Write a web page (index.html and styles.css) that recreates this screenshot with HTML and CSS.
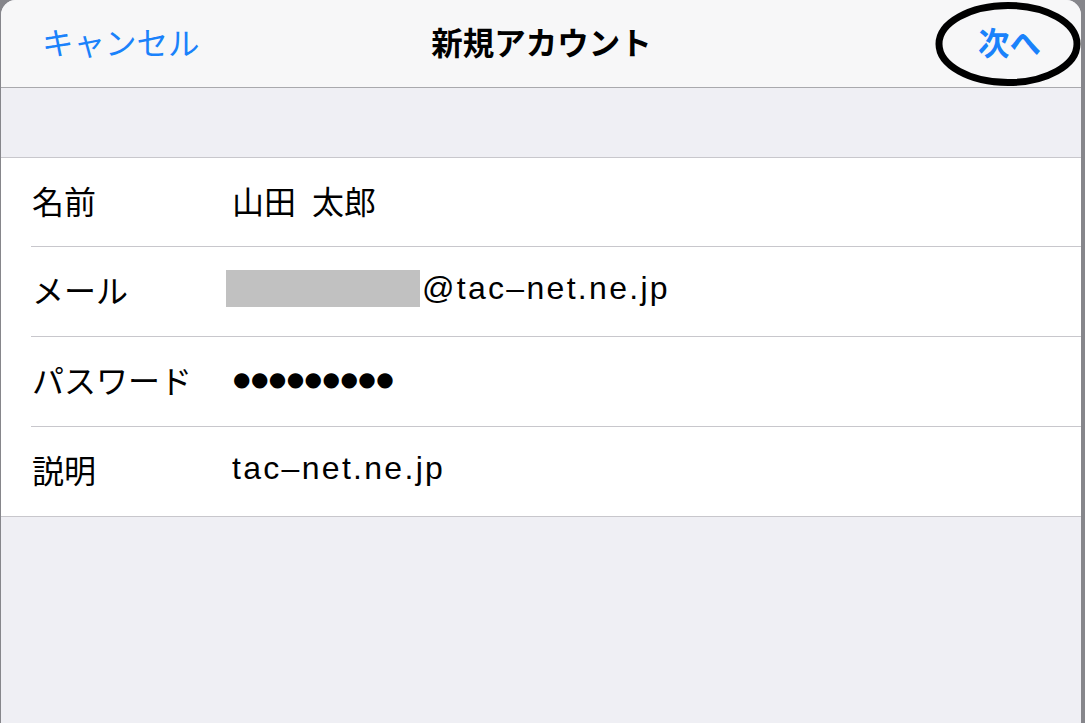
FILE: index.html
```html
<!DOCTYPE html>
<html lang="ja">
<head>
<meta charset="utf-8">
<title>新規アカウント</title>
<link rel="stylesheet" href="styles.css">
</head>
<body>
<div class="sheet">
  <header class="navbar">
    <span class="nav-btn nav-left">キャンセル</span>
    <span class="nav-title">新規アカウント</span>
    <span class="nav-btn nav-right">次へ</span>
  </header>
  <svg class="circle-mark" width="160" height="96" viewBox="0 0 160 96" aria-hidden="true">
    <ellipse cx="77" cy="47" rx="69" ry="38.5" fill="none" stroke="#000" stroke-width="7"/>
  </svg>
  <div class="spacer"></div>
  <div class="form">
    <div class="row">
      <span class="label">名前</span>
      <span class="value">山田&#8194;太郎</span>
    </div>
    <div class="row">
      <span class="label">メール</span>
      <span class="value"><span class="redact"></span><span class="latin">@tac–net.ne.jp</span></span>
    </div>
    <div class="row">
      <span class="label">パスワード</span>
      <span class="value dots">●●●●●●●●●</span>
    </div>
    <div class="row">
      <span class="label">説明</span>
      <span class="value latin">tac–net.ne.jp</span>
    </div>
  </div>
</div>
</body>
</html>
```

FILE: styles.css
```css
html, body {
  margin: 0;
  padding: 0;
  height: 100%;
}

body {
  background: #86868b;
  font-family: "Noto Sans CJK JP", "Noto Sans", sans-serif;
  overflow: hidden;
}

.sheet {
  position: relative;
  margin: 0 4px 0 1px;
  height: 723px;
  background: #efeff4;
  border-radius: 15px 15px 0 0;
  overflow: hidden;
}

.navbar {
  box-sizing: border-box;
  height: 88px;
  background: #f7f7f8;
  border-bottom: 1px solid #a9a9ad;
  display: grid;
  grid-template-columns: 1fr auto 1fr;
  align-items: center;
  padding: 0 40px 6px 41px;
  font-size: 31.5px;
}

.nav-btn {
  color: #1a82fb;
}

.nav-left {
  justify-self: start;
}

.nav-right {
  justify-self: end;
  font-weight: 700;
}

.nav-title {
  font-weight: 700;
  color: #000;
}

.circle-mark {
  position: absolute;
  left: 930px;
  top: -3px;
}

.spacer {
  height: 69px;
}

.form {
  background: #fff;
  border-top: 1px solid #c8c7cc;
  border-bottom: 1px solid #c8c7cc;
  padding-left: 30px;
}

.row {
  box-sizing: border-box;
  height: 90px;
  padding-bottom: 6px;
  display: flex;
  align-items: center;
  border-bottom: 1px solid #c8c7cc;
  font-size: 32px;
  color: #000;
}

.row:first-child {
  height: 89px;
  padding-bottom: 5px;
}

.row:last-child {
  border-bottom: none;
  height: 89px;
}

.label {
  width: 200px;
  padding-left: 1px;
  flex: none;
}

.value {
  display: flex;
  align-items: center;
}

.latin {
  font-family: "Liberation Sans", Arial, sans-serif;
  font-size: 32px;
  letter-spacing: 2.3px;
}

.redact {
  display: inline-block;
  width: 194px;
  height: 37px;
  background: #c1c1c1;
  margin-left: -6px;
  margin-right: 2px;
}

.dots {
  font-family: "DejaVu Sans", sans-serif;
  font-size: 20px;
  letter-spacing: 0.45px;
  padding-left: 1px;
}
```
